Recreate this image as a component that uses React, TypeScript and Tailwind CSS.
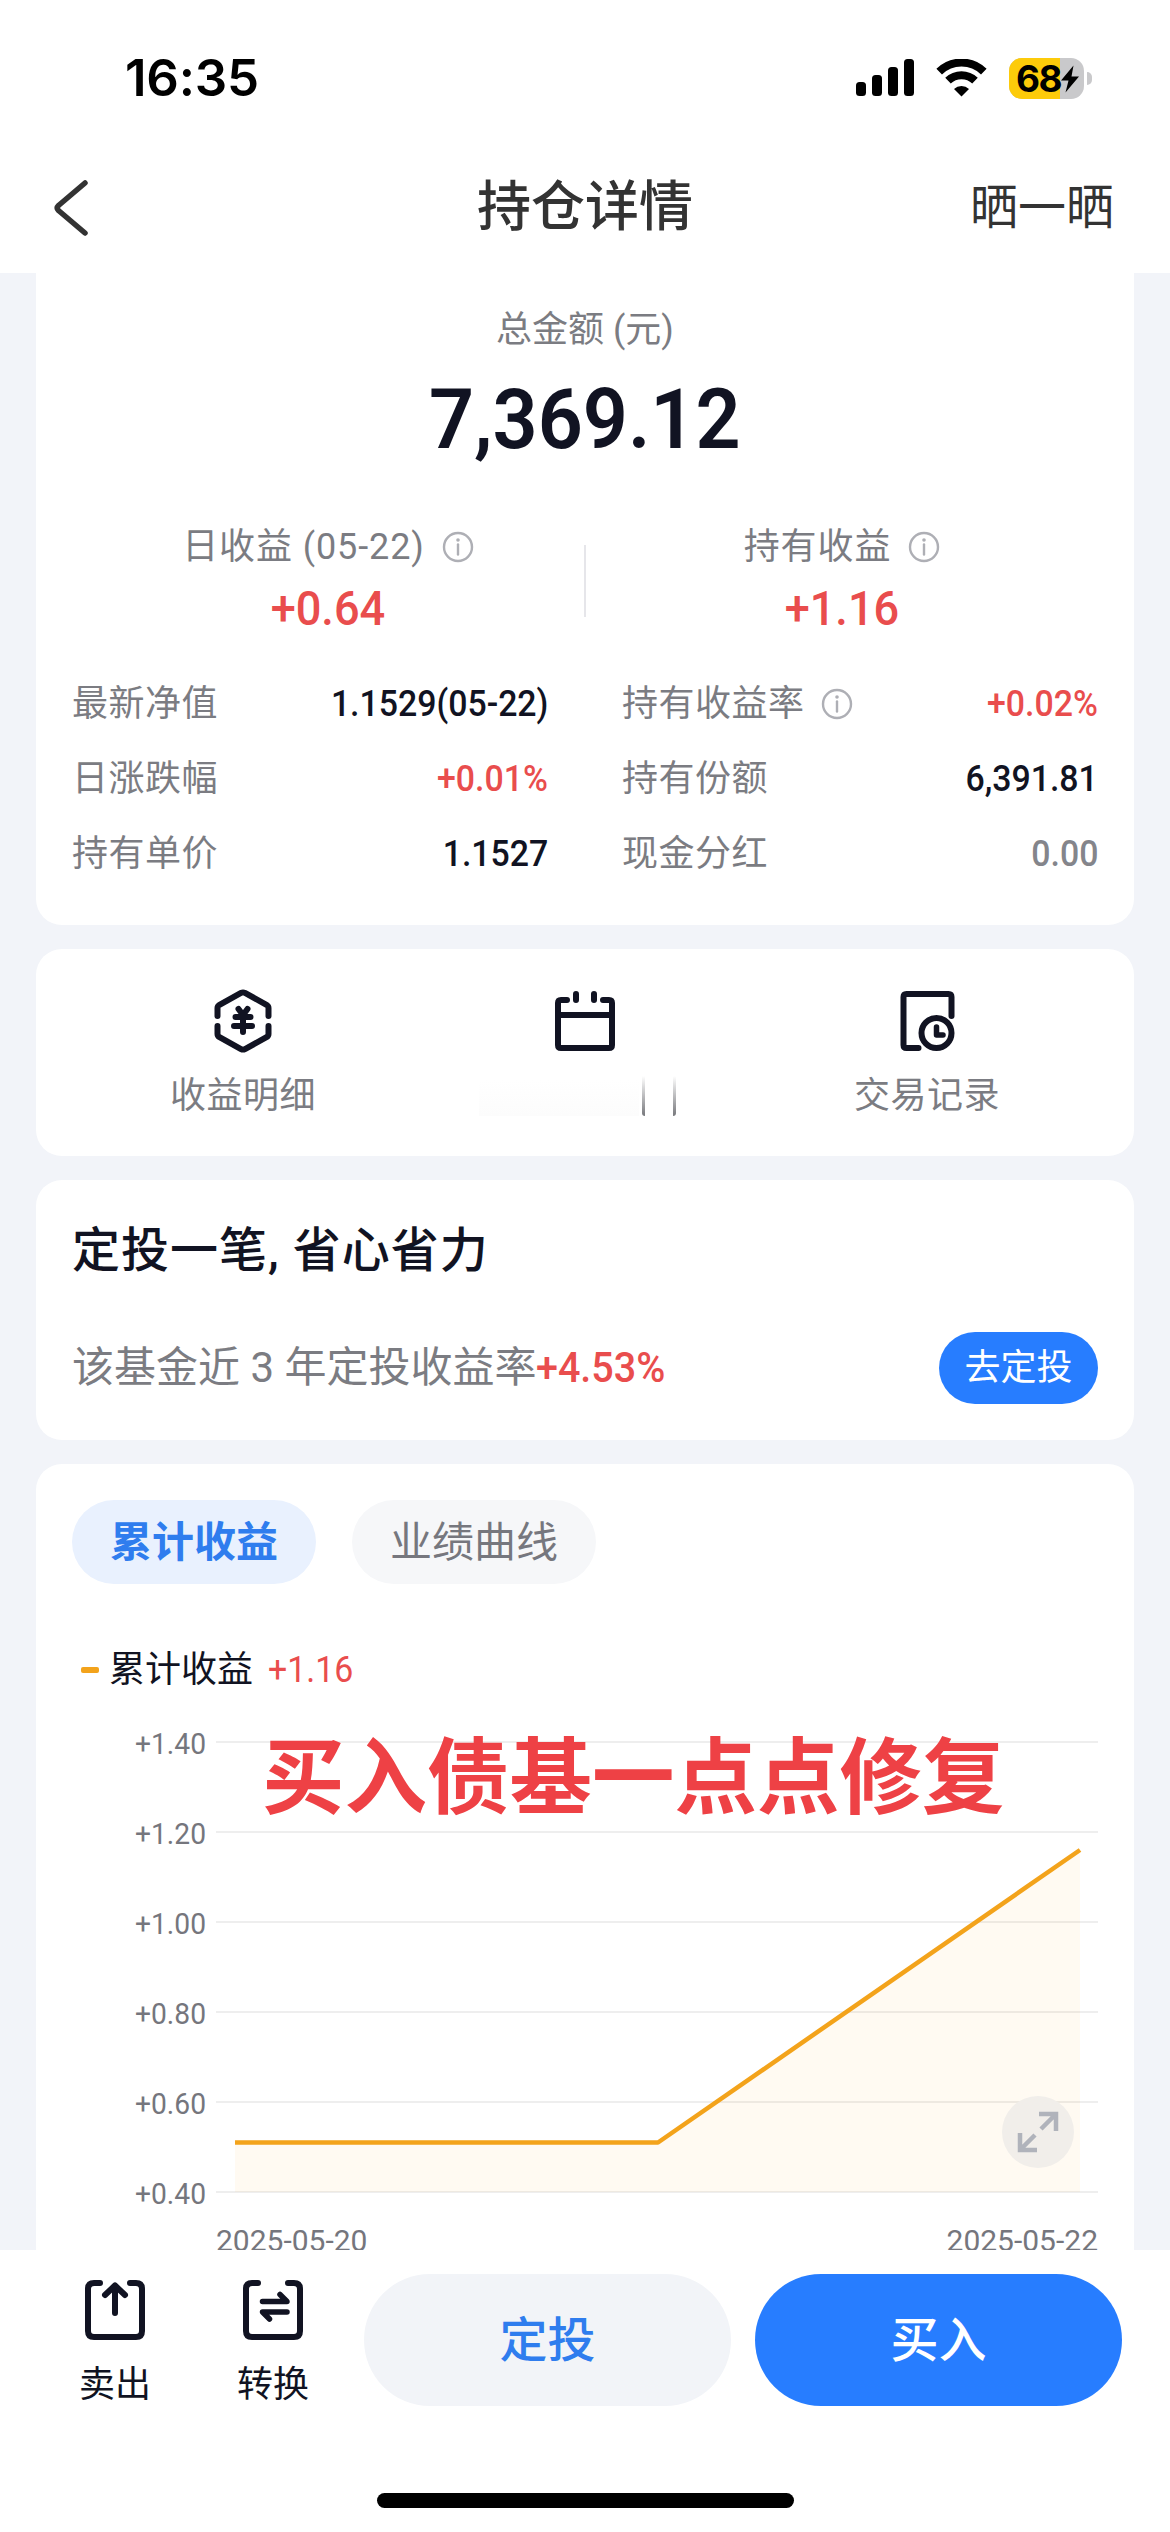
import type { ReactNode } from "react";
import clsx from "clsx";

// Figures are set slightly condensed
const NUM = "inline-block scale-x-[0.94]";

const details = [
  { label: "最新净值", value: "1.1529(05-22)", tone: "text-[#111322]" },
  { label: "持有收益率", value: "+0.02%", tone: "text-[#e94d4d]", info: true },
  { label: "日涨跌幅", value: "+0.01%", tone: "text-[#e94d4d]" },
  { label: "持有份额", value: "6,391.81", tone: "text-[#111322]" },
  { label: "持有单价", value: "1.1527", tone: "text-[#111322]" },
  { label: "现金分红", value: "0.00", tone: "text-[#84858b]" },
];

const ticks = ["+1.40", "+1.20", "+1.00", "+0.80", "+0.60", "+0.40"];

const points = [
  { x: 19, v: 0.51 },
  { x: 442, v: 0.51 },
  { x: 864, v: 1.16 },
];
const toY = (v: number) => 1 + (1.4 - v) * 450;
const line = points.map(p => `${p.x},${toY(p.v)}`).join(" ");

function Info() {
  return (
    <svg width="32" height="32" viewBox="0 0 32 32" fill="none" stroke="#aeafb5" strokeWidth="2.4">
      <circle cx="16" cy="16" r="14" />
      <path d="M16 13.5v10" strokeLinecap="round" />
      <circle cx="16" cy="9" r="1.8" fill="#aeafb5" stroke="none" />
    </svg>
  );
}

function StatusBar() {
  return (
    <div className="flex h-[156px] items-center justify-between pr-[78px] pl-[125px]">
      <span className="font-['Inter',sans-serif] text-[51px] leading-[60px] font-semibold tracking-[-0.2px] text-black">16:35</span>
      <div className="flex items-center">
        <svg width="58" height="38" viewBox="0 0 58 38">
          <rect x="0" y="23" width="10" height="14" rx="3.5" />
          <rect x="16" y="16" width="10" height="21" rx="3.5" />
          <rect x="32" y="8" width="10" height="29" rx="3.5" />
          <rect x="48" y="0" width="10" height="37" rx="3.5" />
        </svg>
        <svg className="ml-[22px]" width="51" height="38" viewBox="0 0 51 38" fill="none" stroke="#000">
          <path d="M3.2 12.6a32 32 0 0 1 44.6 0" strokeWidth="8" />
          <path d="M12 21.6a19.5 19.5 0 0 1 27 0" strokeWidth="8" />
          <path d="M25.5 37.5l-7.5-7.5a11 11 0 0 1 15 0z" fill="#000" stroke="none" />
        </svg>
        <div className="relative ml-[22px] flex h-[41px] w-[75px] rounded-[13px] bg-[#c9c9cb]">
          <div className="absolute inset-y-0 left-0 w-[51px] rounded-l-[13px] bg-[#fdcb0a]" />
          <span className="relative pl-[7px] font-['Inter',sans-serif] text-[37px] leading-[41px] font-bold tracking-[-1.5px] text-black">68</span>
          <svg className="absolute top-[7px] left-[51px]" width="20" height="28" viewBox="0 0 20 28">
            <path d="M13.5 0.5L1 15.5h7.5L5.5 27.5L19 11.5h-7.5z" />
          </svg>
        </div>
        <div className="ml-[3px] h-[13px] w-[5px] rounded-r-full bg-[#c9c9cb]" />
      </div>
    </div>
  );
}

function Header() {
  return (
    <div className="grid h-[117px] grid-cols-3 items-center pb-[13px] text-[#333]">
      <svg className="ml-[53px]" width="36" height="56" viewBox="0 0 36 56" fill="none" stroke="#333" strokeWidth="5.5" strokeLinecap="round" strokeLinejoin="round">
        <path d="M32 3L5.5 25.5q-2.5 2.5 0 5L32 53" />
      </svg>
      <h1 className="text-center text-[54px] leading-[60px] font-medium">持仓详情</h1>
      <span className="pr-[56px] text-right text-[48px] leading-[60px]">晒一晒</span>
    </div>
  );
}

function Gain({ label, value }: { label: string; value: string }) {
  return (
    <div className="flex flex-1 flex-col items-center">
      <div className="flex h-[54px] items-center gap-[17px] text-[36px] text-[#7b7c82]">
        <span className="tracking-[0.9px]">{label}</span>
        <Info />
      </div>
      <span className={clsx(NUM, "mt-[5px] text-[48px] leading-[60px] font-medium text-[#e94d4d]")}>{value}</span>
    </div>
  );
}

function Summary() {
  return (
    <section className="h-[652px] shrink-0 rounded-b-[26px] bg-white px-9 pt-[30px]">
      <p className="text-center text-[36px] leading-[54px] text-[#7b7c82]">总金额 (元)</p>
      <p className="mt-[17px] text-center text-[84px] leading-[92px] font-semibold text-[#111322]">
        <span className={NUM}>7,369.12</span>
      </p>
      <div className="mt-[54px] flex">
        <Gain label="日收益 (05-22)" value="+0.64" />
        <div className="mt-[25px] h-[72px] w-[2px] bg-[#e6e6ea]" />
        <Gain label="持有收益" value="+1.16" />
      </div>
      <div className="mt-[27px] grid grid-cols-2 gap-x-[74px]">
        {details.map(d => (
          <div key={d.label} className="flex h-[75px] items-center text-[36px]">
            <span className="mr-4 tracking-[0.5px] text-[#7b7c82]">{d.label}</span>
            {d.info && <Info />}
            <span className={clsx(NUM, "ml-auto origin-right font-medium", d.tone)}>{d.value}</span>
          </div>
        ))}
      </div>
    </section>
  );
}

function Shortcut({ label, children }: { label?: ReactNode; children: ReactNode }) {
  return (
    <div className="flex flex-1 flex-col items-center pt-[39px]">
      <svg width="66" height="66" viewBox="0 0 66 66" fill="none" stroke="#111322" strokeWidth="6" strokeLinecap="round" strokeLinejoin="round">
        {children}
      </svg>
      <div className="mt-[15px] flex h-[54px] items-center text-[36px] tracking-[0.5px] text-[#7b7c82]">{label}</div>
    </div>
  );
}

function Shortcuts() {
  return (
    <section className="flex h-[207px] shrink-0 rounded-[26px] bg-white px-9">
      <Shortcut label="收益明细">
        <path d="M7.5 28V20q0-2 2-3.2L31 4.9q2-1 4 0l21.5 11.9q2 1.2 2 3.2v8" />
        <path d="M7.5 38v8q0 2 2 3.2L31 61.1q2 1 4 0l21.5-11.9q2-1.2 2-3.2v-8" />
        <path d="M28.5 21l4.5 6 4.5-6M25.5 29h15M24 38h18M33 28v16" />
      </Shortcut>
      <Shortcut
        label={
          <span className="relative flex h-[40px] w-[212px] items-end">
            <span className="h-[36px] w-[160px] bg-linear-to-b from-white to-[#fcfcfc]" />
            <span className="absolute top-0 left-[163px] h-[40px] w-[3px] rounded-bl-full bg-linear-to-b from-transparent to-[#77787c]" />
            <span className="absolute top-0 left-[194px] h-[40px] w-[3px] rounded-br-full bg-linear-to-b from-transparent to-[#77787c]" />
          </span>
        }
      >
        <path d="M15 12H9q-3 0-3 3v42q0 3 3 3h48q3 0 3-3V15q0-3-3-3h-6M6 27h54" />
        <path d="M24 6v6M42 6v6" />
      </Shortcut>
      <Shortcut label="交易记录">
        <path d="M57.5 28V9q0-3-3-3H12.5q-3 0-3 3v48q0 3 3 3h12" />
        <circle cx="42.5" cy="45" r="15" />
        <path d="M42.5 39v8h6.5" strokeWidth="5.5" />
      </Shortcut>
    </section>
  );
}

function Promo() {
  return (
    <section className="h-[260px] shrink-0 rounded-[26px] bg-white px-9 pt-[35px]">
      <h2 className="text-[48px] leading-[72px] font-medium tracking-[1px] text-[#111322]">定投一笔, 省心省力</h2>
      <div className="mt-[45px] flex h-[72px] items-center justify-between">
        <p className="text-[42px] leading-[72px] text-[#7b7c82]">
          该基金近 3 年定投收益率
          <span className={clsx(NUM, "origin-left font-medium text-[#e94d4d]")}>+4.53%</span>
        </p>
        <button className="h-[72px] w-[159px] rounded-full bg-[#277dff] text-[36px] text-white">去定投</button>
      </div>
    </section>
  );
}

function Chart() {
  return (
    <div className="relative mt-[17px]">
      <div className="flex">
        <div className="w-[134px] shrink-0 origin-right scale-x-[0.94] text-right text-[30px] text-[#75767d]">
          {ticks.map(t => (
            <div key={t} className="h-[90px] leading-[60px]">{t}</div>
          ))}
        </div>
        <svg className="mt-[27px] ml-[10px] shrink-0" width="882" height="460" viewBox="0 0 882 460">
          <polygon points={`19,451 ${line} 864,451`} fill="#fffaf2" />
          {ticks.map((t, i) => (
            <rect key={t} x="0" y={i * 90} width="882" height="2" fill="#000" fillOpacity="0.065" />
          ))}
          <polyline points={line} fill="none" stroke="#f3a31b" strokeWidth="4.5" strokeLinejoin="round" />
        </svg>
      </div>
      <div className="-mt-[35px] ml-[144px] flex justify-between text-[30px] leading-[44px] text-[#75767d]">
        <span>2025-05-20</span>
        <span>2025-05-22</span>
      </div>
      <p className="absolute top-[5px] left-[190px] text-[82.5px] leading-[120px] font-bold whitespace-nowrap text-[#ee4145]">买入债基一点点修复</p>
      <button className="absolute top-[382px] right-[24px] flex size-[72px] items-center justify-center rounded-full bg-[#f1eeea]">
        <svg width="44" height="44" viewBox="0 0 44 44" fill="none" stroke="#b0b3bb" strokeWidth="4.5">
          <path d="M23 4h17v17M39 5L25 19M21 40H4V23M5 39l14-14" />
        </svg>
      </button>
    </div>
  );
}

function Performance() {
  return (
    <section className="shrink-0 rounded-t-[26px] bg-white px-9 pt-9">
      <div className="flex gap-9 text-[42px]">
        <button className="h-[84px] w-[244px] rounded-full bg-[#e9f1fe] font-bold text-[#2f7dee]">累计收益</button>
        <button className="h-[84px] w-[244px] rounded-full bg-[#f6f7f9] text-[#76777e]">业绩曲线</button>
      </div>
      <div className="mt-[59px] flex h-[54px] items-center pl-[9px] text-[36px] text-[#111322]">
        <span className="mr-[10px] h-[6px] w-[18px] rounded-[2px] bg-[#f3a31b]" />
        累计收益
        <span className={clsx(NUM, "ml-[15px] origin-left text-[#e94d4d]")}>+1.16</span>
      </div>
      <Chart />
    </section>
  );
}

function BarItem({ label, children }: { label: string; children: ReactNode }) {
  return (
    <div className="flex w-[72px] flex-col items-center pt-[27px] text-[#111322]">
      <svg width="66" height="66" viewBox="0 0 66 66" fill="none" stroke="#111322" strokeWidth="6" strokeLinecap="round" strokeLinejoin="round">
        <path d="M18 6h-6q-6 0-6 6v42q0 6 6 6h42q6 0 6-6V12q0-6-6-6h-6" />
        {children}
      </svg>
      <span className="mt-[15px] text-[36px] leading-[54px] whitespace-nowrap">{label}</span>
    </div>
  );
}

function BottomBar() {
  return (
    <div className="h-[282px] bg-white">
      <div className="flex h-[243px] items-start pl-[79px]">
        <BarItem label="卖出">
          <path d="M33 36V9M23 18L33 8.5 43 18" />
        </BarItem>
        <div className="w-[86px]" />
        <BarItem label="转换">
          <path d="M22.5 24.5h24.5l-7-7M47 35H22.5l7 7" strokeWidth="5.5" />
        </BarItem>
        <button className="mt-6 ml-[55px] h-[132px] w-[367px] rounded-full bg-[#f2f4f8] pt-[2px] text-[48px] font-medium text-[#2f7dee]">定投</button>
        <button className="mt-6 ml-6 h-[132px] w-[367px] rounded-full bg-[#277dff] pt-[2px] text-[48px] font-medium text-white">买入</button>
      </div>
      <div className="mx-auto h-[15px] w-[417px] rounded-full bg-black" />
    </div>
  );
}

export default function App() {
  return (
    <div className="flex h-[2532px] w-[1170px] flex-col overflow-hidden bg-white font-['Roboto','Noto_Sans_CJK_SC',sans-serif]">
      <StatusBar />
      <Header />
      <main className="flex h-[1977px] flex-col gap-6 overflow-hidden bg-[#f2f4f9] px-9">
        <Summary />
        <Shortcuts />
        <Promo />
        <Performance />
      </main>
      <BottomBar />
    </div>
  );
}
